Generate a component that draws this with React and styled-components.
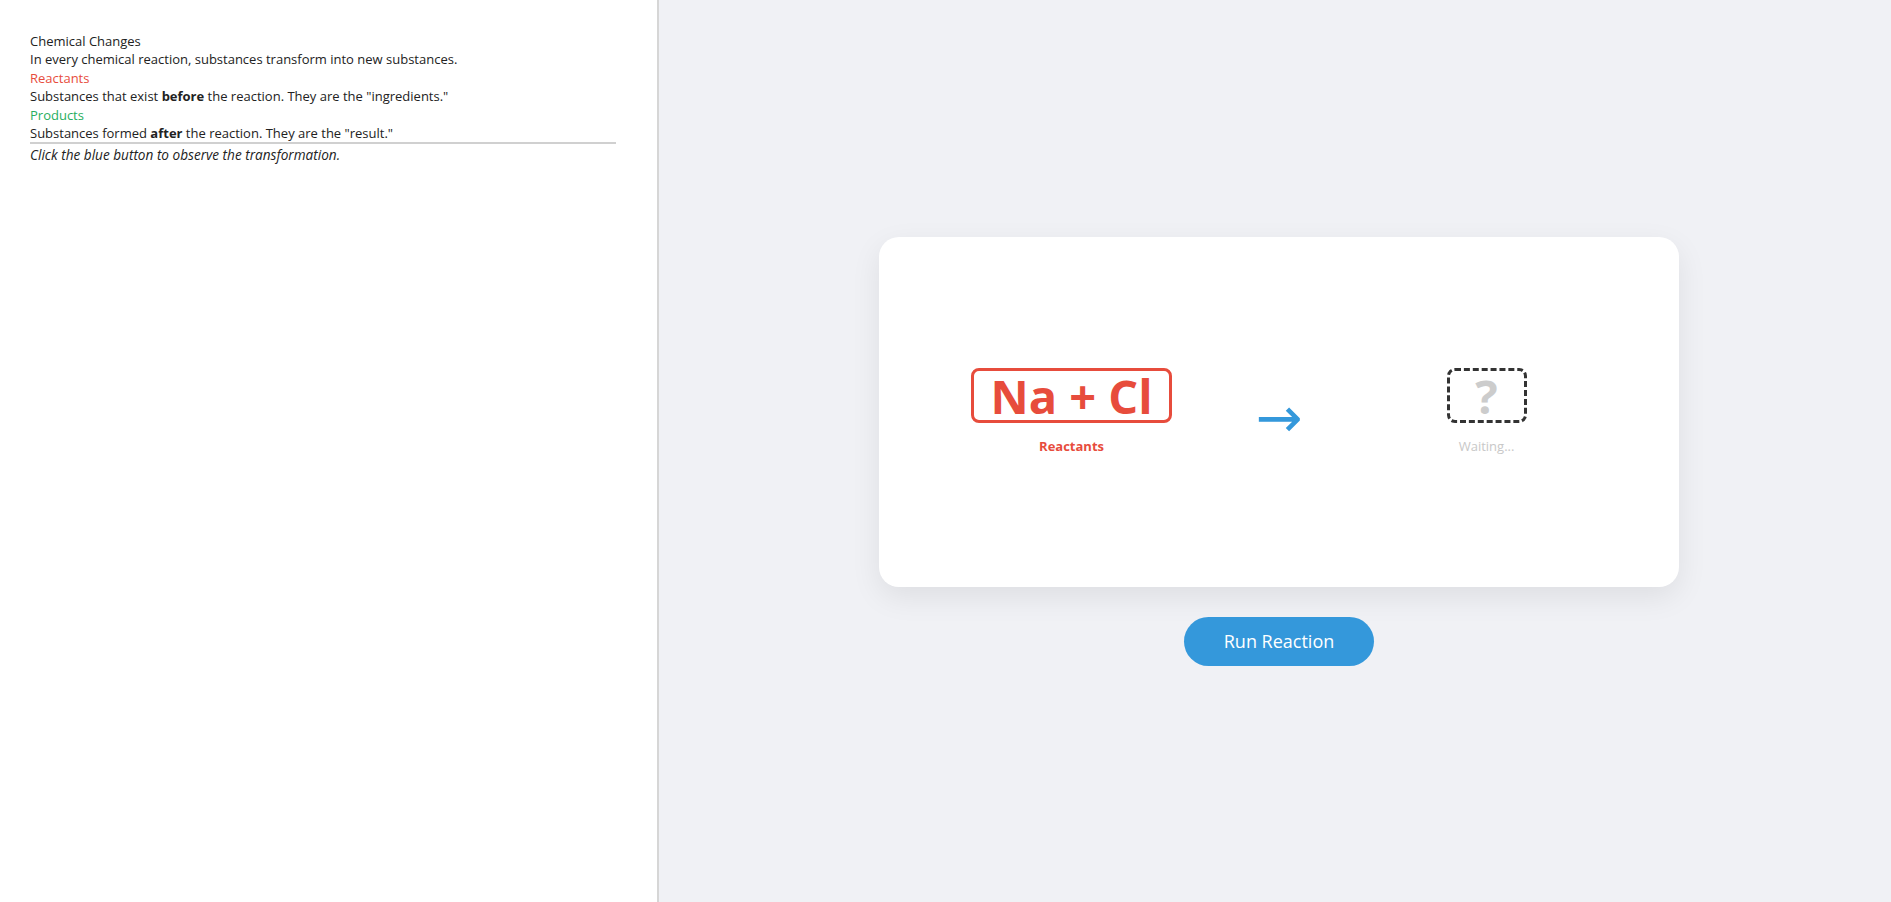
import React from 'react';
import styled, { createGlobalStyle } from 'styled-components';

const GlobalStyle = createGlobalStyle`
  html, body {
    margin: 0;
    padding: 0;
    height: 100%;
  }
  body {
    font-family: "Open Sans", "Noto Sans", sans-serif;
    color: #222;
  }
  #root {
    height: 100%;
  }
`;

const Layout = styled.div`
  display: flex;
  height: 902px;
  width: 100%;
`;

const Sidebar = styled.aside`
  width: 659px;
  flex-shrink: 0;
  box-sizing: border-box;
  padding: 32px 41px 30px 30px;
  background: #fff;
  border-right: 2px solid #d6d6d6;
  font-size: 13px;
  line-height: 18.4px;
`;

const Line = styled.div`
  color: ${(p) => p.color || '#222'};
`;

const Hint = styled.div`
  border-top: 2px solid #d0d0d0;
  font-style: italic;
  font-size: 13.6px;
  padding-top: 2px;
`;

const Stage = styled.main`
  flex: 1;
  background: #f0f1f5;
  display: flex;
  flex-direction: column;
  align-items: center;
  justify-content: center;
  gap: 30px;
  padding-left: 8px;
`;

const Card = styled.section`
  width: 800px;
  height: 350px;
  box-sizing: border-box;
  background: #fff;
  border-radius: 20px;
  box-shadow: 0 10px 30px rgba(0, 0, 0, 0.08);
  display: flex;
  align-items: center;
  justify-content: center;
  gap: 84px;
`;

const Molecule = styled.div`
  min-width: 200px;
  display: flex;
  flex-direction: column;
  align-items: center;
  gap: 14px;
`;

const Formula = styled.div`
  box-sizing: border-box;
  height: 55px;
  padding: 0 16px;
  display: flex;
  align-items: center;
  justify-content: center;
  border: 3px ${(p) => (p.pending ? 'dashed #333' : 'solid #e74c3c')};
  border-radius: 8px;
  color: ${(p) => (p.pending ? '#cccccc' : '#e74c3c')};
  font-size: 47px;
  font-weight: 700;
  min-width: ${(p) => (p.pending ? '80px' : 'auto')};
`;

const Label = styled.div`
  font-size: 13px;
  font-weight: ${(p) => (p.pending ? 400 : 700)};
  color: ${(p) => (p.pending ? '#c8c8c8' : '#e74c3c')};
`;

const Arrow = styled.div`
  color: #3498db;
  font-family: "DejaVu Sans", sans-serif;
  font-size: 56px;
  line-height: 1;
  margin-top: 12px;
`;

const RunButton = styled.button`
  background: #3498db;
  color: #fff;
  border: none;
  border-radius: 25px;
  height: 49px;
  padding: 0 40px;
  font-family: "Open Sans", sans-serif;
  font-size: 18px;
  cursor: pointer;

  &:hover {
    background: #2d86c4;
  }
`;

export default function App() {
  return (
    <>
      <GlobalStyle />
      <Layout>
        <Sidebar>
          <Line>Chemical Changes</Line>
          <Line>In every chemical reaction, substances transform into new substances.</Line>
          <Line color="#e74c3c">Reactants</Line>
          <Line>
            Substances that exist <b>before</b> the reaction. They are the "ingredients."
          </Line>
          <Line color="#27ae60">Products</Line>
          <Line>
            Substances formed <b>after</b> the reaction. They are the "result."
          </Line>
          <Hint>Click the blue button to observe the transformation.</Hint>
        </Sidebar>
        <Stage>
          <Card>
            <Molecule>
              <Formula>Na + Cl</Formula>
              <Label>Reactants</Label>
            </Molecule>
            <Arrow>→</Arrow>
            <Molecule>
              <Formula pending>?</Formula>
              <Label pending>Waiting...</Label>
            </Molecule>
          </Card>
          <RunButton>Run Reaction</RunButton>
        </Stage>
      </Layout>
    </>
  );
}
